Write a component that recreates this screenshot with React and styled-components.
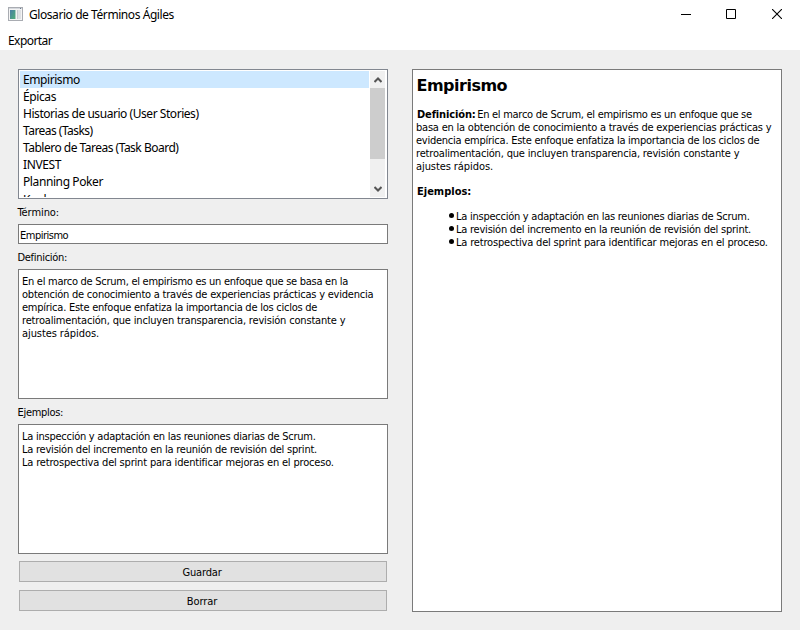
import React from "react";
import styled, { createGlobalStyle } from "styled-components";

const Global = createGlobalStyle`
  * { box-sizing: border-box; }
  html, body { margin: 0; background: #efefef; }
`;

const Window = styled.div`
  width: 800px;
  height: 630px;
  display: flex;
  flex-direction: column;
  background: #efefef;
  color: #000;
  font: 11px/13px "DejaVu Sans Condensed", "DejaVu Sans", Tahoma, sans-serif;
  font-stretch: condensed;
  white-space: pre;
  overflow: hidden;
`;

const TitleBar = styled.header`
  height: 30px;
  display: flex;
  align-items: center;
  padding: 0 0 2px 8px;
  background: #fff;
`;

const Title = styled.h1`
  flex: 1;
  margin: 2px 0 0 6px;
  font: 12px/16px "Noto Sans", "Segoe UI", sans-serif;
  letter-spacing: -0.43px;
`;

const Control = styled.div`
  width: ${(p) => (p.$last ? 46 : 45)}px;
  height: 28px;
  padding-right: ${(p) => (p.$last ? 0 : 1)}px;
  display: flex;
  align-items: center;
  justify-content: center;
`;

const MenuBar = styled.nav`
  height: 20px;
  padding: 3px 8px 0;
  background: #fff;
  font: 12px/16px "Noto Sans", "Segoe UI", sans-serif;
  letter-spacing: -0.56px;
`;

const Content = styled.main`
  display: flex;
  gap: 24px;
  padding: 19px 18px 18px;
  flex: 1;
`;

const Column = styled.section`
  width: 370px;
  display: flex;
  flex-direction: column;
`;

const TermList = styled.div`
  height: 130px;
  flex: none;
  display: flex;
  padding: 1px;
  border: 1px solid #828790;
  background: #fff;
`;

const Rows = styled.div`
  flex: 1;
  overflow: hidden;
  padding-right: 1px;
`;

const Row = styled.div`
  height: 17px;
  padding-left: 3px;
  font: 12px/17px "Noto Sans", "Segoe UI", sans-serif;
  letter-spacing: ${(p) => p.$spacing}px;
  background: ${(p) => (p.$selected ? "#cde8ff" : "transparent")};

  &:last-child {
    padding-top: 1px;
  }
`;

const ScrollBar = styled.div`
  width: 16px;
  display: flex;
  flex-direction: column;
  background: #f0f0f0;
  border-right: 1px solid #fff;
`;

const ScrollButton = styled.div`
  height: 17px;
  display: flex;
  align-items: center;
  justify-content: center;
`;

const Track = styled.div`
  flex: 1;
`;

const Thumb = styled.div`
  height: 71px;
  background: #cdcdcd;
`;

const Label = styled.label`
  height: 25px;
  padding-top: 2px;
  margin-left: -0.5px;
  display: flex;
  align-items: center;
  letter-spacing: ${(p) => p.$spacing}px;
`;

const Input = styled.div`
  height: 20px;
  padding: 4px 1px 0;
  border: 1px solid #7a7a7a;
  background: #fff;
  letter-spacing: -0.5px;
`;

const TextArea = styled.div`
  height: 130px;
  padding: 5px 3px;
  border: 1px solid #7a7a7a;
  background: #fff;
`;

const Line = styled.div`
  height: 13px;
  letter-spacing: ${(p) => p.$spacing}px;
`;

const Button = styled.button`
  height: 21px;
  margin: ${(p) => p.$top}px 1px 0;
  padding: 2px 2px 0 0;
  border: 1px solid #adadad;
  background: #e1e1e1;
  font: inherit;
  color: inherit;
  letter-spacing: ${(p) => p.$spacing}px;
`;

const Preview = styled.article`
  width: 370px;
  height: 543px;
  padding: 5px 3px;
  border: 1px solid #7a7a7a;
  background: #fff;
`;

const Heading = styled.h2`
  margin: 0 0 12px 0.5px;
  font: bold 16px/21px "DejaVu Sans", Tahoma, sans-serif;
  letter-spacing: -0.5px;
`;

const Strong = styled.b`
  margin: 0 1.5px 0 1px;
  letter-spacing: ${(p) => p.$spacing || 0}px;
`;

const Examples = styled.ul`
  margin: 12px 0 0;
  padding: 0 0 0 33px;
  list-style: none;
`;

const Example = styled.li`
  display: flex;
  align-items: center;
  gap: 2px;
`;

const Bullet = styled.span`
  width: 5px;
  height: 5px;
  margin-top: -2px;
  border-radius: 50%;
  background: #000;
`;

const Paragraph = styled.div`
  margin-bottom: 12px;
`;

const terms = [
  ["Empirismo", -0.43],
  ["Épicas", -0.4],
  ["Historias de usuario (User Stories)", -0.45],
  ["Tareas (Tasks)", -0.53],
  ["Tablero de Tareas (Task Board)", -0.5],
  ["INVEST", -0.4],
  ["Planning Poker", -0.4],
  ["Kanban", -0.4],
];

const definition = [
  ["En el marco de Scrum, el empirismo es un enfoque que se basa en la", -0.27],
  ["obtención de conocimiento a través de experiencias prácticas y evidencia", -0.222],
  ["empírica. Este enfoque enfatiza la importancia de los ciclos de", -0.245],
  ["retroalimentación, que incluyen transparencia, revisión constante y", -0.176],
  ["ajustes rápidos.", -0.08],
];

const previewDefinition = [
  ["basa en la obtención de conocimiento a través de experiencias prácticas y", -0.212],
  ["evidencia empírica. Este enfoque enfatiza la importancia de los ciclos de", -0.247],
  ["retroalimentación, que incluyen transparencia, revisión constante y", -0.176],
  ["ajustes rápidos.", -0.08],
];

const examples = [
  ["La inspección y adaptación en las reuniones diarias de Scrum.", -0.25],
  ["La revisión del incremento en la reunión de revisión del sprint.", -0.23],
  ["La retrospectiva del sprint para identificar mejoras en el proceso.", -0.178],
];

const Lines = ({ items }) =>
  items.map(([text, spacing]) => (
    <Line key={text} $spacing={spacing}>{text}</Line>
  ));

const AppIcon = () => (
  <svg width="15" height="14" viewBox="0 0 15 14" shapeRendering="crispEdges">
    <defs>
      <linearGradient id="pane" x1="0" y1="0" x2="1" y2="1">
        <stop offset="0" stopColor="#4a7da6" />
        <stop offset="1" stopColor="#4fae78" />
      </linearGradient>
    </defs>
    <rect x="0.5" y="0.5" width="14" height="13" fill="#f4f4f4" stroke="#a9acb2" />
    <path d="M1 1.5h13" stroke="#d5d8dd" />
    <rect x="2" y="3" width="5" height="9" fill="url(#pane)" />
    <rect x="7" y="3" width="1" height="9" fill="#a9cfc0" />
    <rect x="9" y="3" width="4" height="9" fill="#dfe1e4" />
    <rect x="9" y="3" width="1" height="9" fill="#c6cacf" />
    <path d="M12 1.5h1" stroke="#6b7d92" />
  </svg>
);

const Chevron = ({ down }) => (
  <svg width="8" height="6" viewBox="0 0 8 6">
    <path d={down ? "M.5 1L4 4.5 7.5 1" : "M.5 5L4 1.5 7.5 5"} fill="none" stroke="#555" strokeWidth="2" />
  </svg>
);

export default function App() {
  return (
    <Window>
      <Global />
      <TitleBar>
        <AppIcon />
        <Title>Glosario de Términos Ágiles</Title>
        <Control>
          <svg width="10" height="10"><path d="M0 5.5h10" stroke="#000" /></svg>
        </Control>
        <Control>
          <svg width="10" height="10"><path d="M.5.5h9v9h-9z" fill="none" stroke="#000" /></svg>
        </Control>
        <Control $last>
          <svg width="10" height="10"><path d="M0 0l10 10M10 0L0 10" stroke="#000" strokeWidth="1.1" /></svg>
        </Control>
      </TitleBar>
      <MenuBar>Exportar</MenuBar>
      <Content>
        <Column>
          <TermList>
            <Rows>
              {terms.map(([name, spacing], i) => (
                <Row key={name} $spacing={spacing} $selected={i === 0}>{name}</Row>
              ))}
            </Rows>
            <ScrollBar>
              <ScrollButton><Chevron /></ScrollButton>
              <Track><Thumb /></Track>
              <ScrollButton><Chevron down /></ScrollButton>
            </ScrollBar>
          </TermList>
          <Label $spacing={-0.08}>Término:</Label>
          <Input>Empirismo</Input>
          <Label $spacing={-0.3}>Definición:</Label>
          <TextArea><Lines items={definition} /></TextArea>
          <Label $spacing={-0.3}>Ejemplos:</Label>
          <TextArea><Lines items={examples} /></TextArea>
          <Button $top={7} $spacing={-0.15}>Guardar</Button>
          <Button $top={8} $spacing={-0.1}>Borrar</Button>
        </Column>
        <Preview>
          <Heading>Empirismo</Heading>
          <Paragraph>
            <Line $spacing={-0.275}>
              <Strong $spacing={-0.13}>Definición:</Strong>En el marco de Scrum, el empirismo es un enfoque que se
            </Line>
            <Lines items={previewDefinition} />
          </Paragraph>
          <Strong>Ejemplos:</Strong>
          <Examples>
            {examples.map(([text, spacing]) => (
              <Example key={text}>
                <Bullet />
                <Line $spacing={spacing}>{text}</Line>
              </Example>
            ))}
          </Examples>
        </Preview>
      </Content>
    </Window>
  );
}
